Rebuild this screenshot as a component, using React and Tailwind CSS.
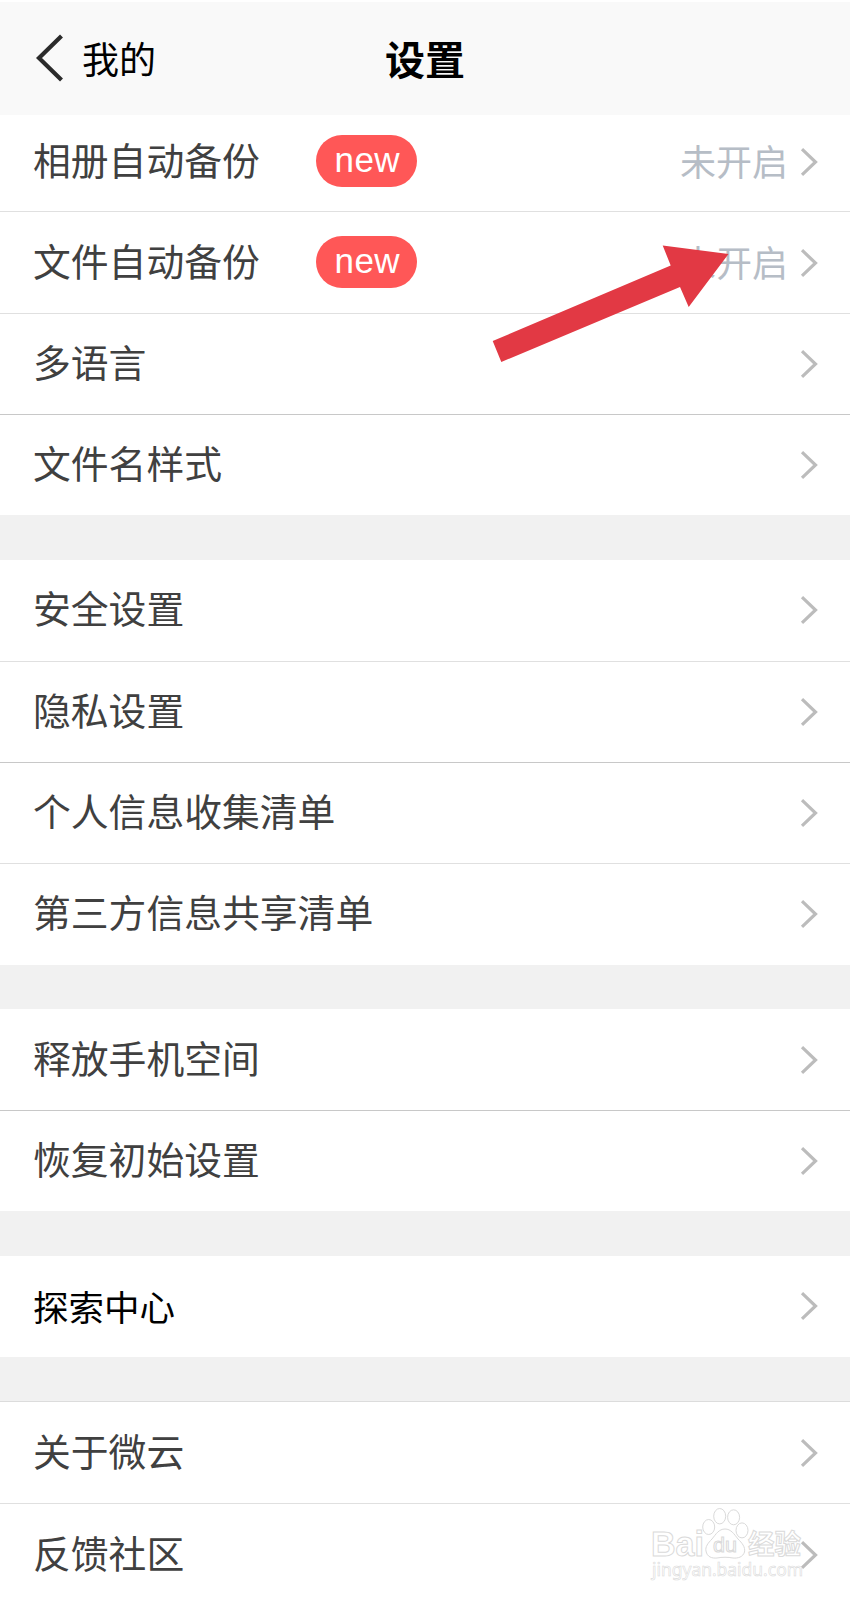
import React from "react";
import clsx from "clsx";

const sections = [
  [
    { label: "相册自动备份", isNew: true, status: "未开启", size: "h-[97px]", first: true },
    { label: "文件自动备份", isNew: true, status: "未开启", size: "h-[102px]" },
    { label: "多语言", size: "h-[101px]", line: "border-[#c8c8c8]" },
    { label: "文件名样式", size: "h-[100px]" },
  ],
  [
    { label: "安全设置", size: "h-[102px]" },
    { label: "隐私设置", size: "h-[101px]", line: "border-[#c8c8c8]" },
    { label: "个人信息收集清单", size: "h-[101px]" },
    { label: "第三方信息共享清单", size: "h-[101px]" },
  ],
  [
    { label: "释放手机空间", size: "h-[102px]", line: "border-[#c8c8c8]" },
    { label: "恢复初始设置", size: "h-[100px]" },
  ],
  [{ label: "探索中心", size: "h-[101px]", dark: true }],
  [
    { label: "关于微云", size: "h-[102px]" },
    { label: "反馈社区", size: "h-[101px]" },
  ],
];

const Chevron = () => (
  <svg className="h-[30px] w-[18px] shrink-0" viewBox="0 0 18 30" fill="none">
    <path d="M2 2.2L15.500 15L2 27.8" stroke="#bcbcbc" strokeWidth="3.2" />
  </svg>
);

const Row = ({ item, last }) => (
  <div
    className={clsx(
      "flex items-center bg-white pl-[33px] pr-[32px]",
      item.size,
      !last && "border-b",
      !last && (item.line || "border-[#e0e0e0]"),
      item.first && "pb-[3px]"
    )}
  >
    <span
      className={clsx(
        "leading-[50px] whitespace-nowrap",
        item.dark ? "pb-[1px] text-[35.5px] text-black" : "pb-[6px] text-[37.8px] text-[#404040]"
      )}
    >
      {item.label}
    </span>
    {item.isNew && (
      <span className="mb-[2px] ml-[56px] flex h-[52px] w-[101px] items-center justify-center rounded-full bg-[#ff5757] pb-[3px] pl-[2px] font-['Liberation_Sans',sans-serif] text-[35px] leading-none tracking-[0.4px] text-white">
        new
      </span>
    )}
    <div className="ml-auto flex items-center gap-[12px]">
      {item.status && (
        <span className="pb-[3px] text-[36px] leading-[50px] text-[#b6bdc6]">{item.status}</span>
      )}
      <Chevron />
    </div>
  </div>
);

// Red pointer over the file backup row
const Arrow = () => (
  <svg
    className="absolute left-[490px] top-[240px] h-[130px] w-[245px]"
    viewBox="490 240 245 130"
  >
    <path
      d="M728.5 254L662.7 245.5L670.7 265.5L492.7 341L501.3 362L680 287L688.7 307Z"
      fill="#e23944"
    />
  </svg>
);

const Watermark = () => (
  <svg
    className="absolute left-[645px] top-[1500px] h-[90px] w-[165px] font-['Noto_Sans','Noto_Sans_CJK_SC',sans-serif]"
    viewBox="645 1500 165 90"
    fill="#ffffff"
    stroke="#dadada"
    strokeWidth="1"
  >
    <text x="651" y="1556" fontSize="35" fontWeight="700" textLength="53" lengthAdjust="spacingAndGlyphs" className="font-['Liberation_Sans',sans-serif]">
      Bai
    </text>
    <ellipse cx="708.7" cy="1527" rx="6" ry="7.5" />
    <ellipse cx="719.7" cy="1516.2" rx="6" ry="7.7" />
    <ellipse cx="733.6" cy="1517.3" rx="6" ry="7.5" />
    <ellipse cx="742" cy="1530.4" rx="6" ry="7.5" />
    <path d="M725 1529C719 1529 716 1534 712 1539C708 1543 705 1547 706 1551C707 1557 712 1558.500 717 1558C722 1557 728 1557 733 1558C738 1558.500 743 1557 744.500 1552C745.500 1547 742 1543 738 1539C734 1534 731 1529 725 1529Z" />
    <text x="713" y="1552" fontSize="21" textLength="24" lengthAdjust="spacingAndGlyphs" className="font-['Liberation_Sans',sans-serif]">
      du
    </text>
    <text x="748" y="1554" fontSize="27" fontWeight="700" textLength="53" lengthAdjust="spacingAndGlyphs">
      经验
    </text>
    <text x="652" y="1576" fontSize="18" textLength="151" lengthAdjust="spacingAndGlyphs" strokeWidth="0.6">
      jingyan.baidu.com
    </text>
  </svg>
);

const App = () => {
  return (
    <div className="relative h-[1600px] w-[850px] overflow-hidden bg-[#f1f1f1] font-['Noto_Sans_CJK_SC',sans-serif]">
      {/* Header */}
      <header className="grid h-[115px] grid-cols-3 items-center border-t-2 border-white bg-[#f9f9f9]">
        <div className="flex items-center gap-[18px] pb-[1px] pl-[35px]">
          <svg className="h-[50px] w-[29px]" viewBox="0 0 29 50" fill="none">
            <path d="M26.500 3L4 25L26.500 47" stroke="#2b2b2b" strokeWidth="4.2" />
          </svg>
          <span className="pb-[1px] text-[37px] leading-[50px] text-black">我的</span>
        </div>
        <h1 className="pb-[2px] text-center text-[40px] font-bold leading-[50px] text-black">设置</h1>
      </header>

      {/* Settings groups */}
      <main className="flex flex-col gap-[44.500px]">
        {sections.map((items, i) => (
          <section key={i} className={clsx(i === 4 && "border-t border-[#dcdcdc]")}>
            {items.map((item, j) => (
              <Row key={item.label} item={item} last={j === items.length - 1} />
            ))}
          </section>
        ))}
      </main>

      <Watermark />
      <Arrow />
    </div>
  );
};

export default App;
